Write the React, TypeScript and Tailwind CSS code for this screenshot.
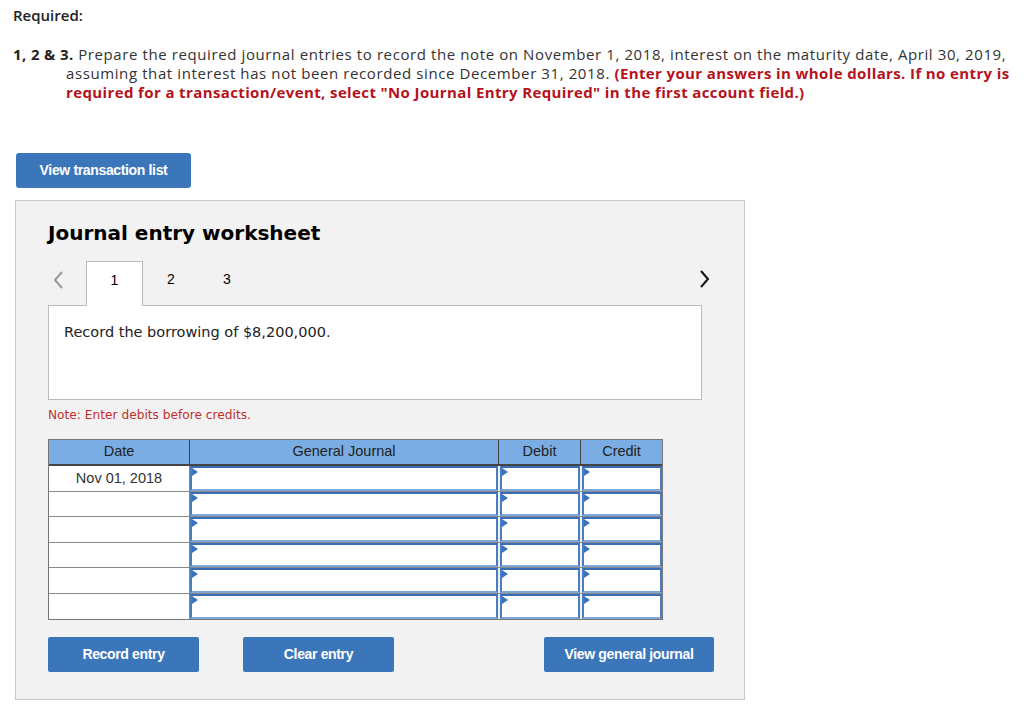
import React from "react";

const Cell = () => (
  <div className="relative h-full border-2 border-[#4a7cc0] border-t-[#3b6db5] border-b-[#7fa6d8] bg-white">
    <div className="absolute left-0 top-0 w-0 h-0 border-t-[4px] border-b-[4px] border-l-[6px] border-t-transparent border-b-transparent border-l-[#3a73bd]" />
  </div>
);

const btn = "h-[35px] rounded-[2px] bg-[#3b76bb] text-white text-[14px] font-bold tracking-[-0.35px]";

export default function App() {
  const rows = ["Nov 01, 2018", "", "", "", "", ""];
  return (
    <div className="w-[1024px] h-[725px] bg-white text-[#333] overflow-hidden" style={{ fontFamily: "'Open Sans', Lato, sans-serif" }}>
      <div className="pl-[13px] pt-[6px] whitespace-nowrap">
        <div className="text-[15px] font-semibold leading-[19px] text-[#222]">Required:</div>
        <div className="mt-[20px] text-[15px] leading-[19px] tracking-[0.6px]">
          <div>
            <b className="font-bold text-[#222] tracking-[0.38px]">1, 2 &amp; 3.</b> Prepare the required journal entries to record the note on November 1, 2018, interest on the maturity date, April 30, 2019,
          </div>
          <div className="pl-[53px]">
            assuming that interest has not been recorded since December 31, 2018.{" "}
            <b className="font-bold text-[#b5121b] tracking-[0.38px]">(Enter your answers in whole dollars. If no entry is</b>
          </div>
          <div className="pl-[53px]">
            <b className="font-bold text-[#b5121b] tracking-[0.38px]">required for a transaction/event, select "No Journal Entry Required" in the first account field.)</b>
          </div>
        </div>
      </div>

      <div className="pl-[16px] mt-[51px]">
        <button className={`w-[175px] ${btn} h-[34px] rounded-[3px]`} style={{ fontFamily: "'Liberation Sans', Arial, sans-serif" }}>
          View transaction list
        </button>
      </div>

      <div className="ml-[15px] mt-[12px] w-[730px] h-[500px] bg-[#f2f2f2] border border-[#c8c8c8] pl-[32px]" style={{ fontFamily: "'DejaVu Sans', Verdana, sans-serif" }}>
        <div className="pt-[20px] text-[20px] font-bold text-black leading-[24px]">Journal entry worksheet</div>

        <div className="mt-[16px] flex items-end h-[45px] w-[654px] relative">
          <svg className="absolute left-[4px] top-[9px]" width="12" height="20" viewBox="0 0 12 20"><path d="M10 2 L3 10 L10 18" stroke="#999" strokeWidth="2" fill="none" /></svg>
          <div className="ml-[38px] w-[57px] h-[45px] bg-white border border-[#bbb] border-b-0 relative z-10 flex justify-center pt-[8px] text-[14px] text-black" style={{ fontFamily: "'Liberation Sans', Arial, sans-serif" }}>1</div>
          <div className="w-[56px] h-[45px] flex justify-center pt-[8px] text-[14px] text-black" style={{ fontFamily: "'Liberation Sans', Arial, sans-serif" }}>2</div>
          <div className="w-[56px] h-[45px] flex justify-center pt-[8px] text-[14px] text-black" style={{ fontFamily: "'Liberation Sans', Arial, sans-serif" }}>3</div>
          <svg className="absolute left-[651px] top-[8px]" width="12" height="20" viewBox="0 0 12 20"><path d="M2 2 L9 10 L2 18" stroke="#111" strokeWidth="2" fill="none" /></svg>
        </div>

        <div className="-mt-px w-[654px] h-[95px] bg-white border border-[#bbb] pl-[15px] pt-[16px] text-[14.5px] text-[#222]">
          Record the borrowing of $8,200,000.
        </div>

        <div className="mt-[7px] text-[12.2px] text-[#c0302c] leading-[16px]">Note: Enter debits before credits.</div>

        <div className="mt-[16px] w-[615px] border border-[#777] bg-[#f2f2f2]" style={{ fontFamily: "'Liberation Sans', Arial, sans-serif" }}>
          <div className="grid grid-cols-[141px_309px_82px_81px] h-[26px] bg-[#7aade3] border-b-2 border-[#444] text-[14.5px] text-[#222] items-center">
            <div className="text-center border-r border-[#444] h-full flex items-center justify-center">Date</div>
            <div className="text-center border-r border-[#444] h-full flex items-center justify-center">General Journal</div>
            <div className="text-center border-r border-[#444] h-full flex items-center justify-center">Debit</div>
            <div className="text-center h-full flex items-center justify-center">Credit</div>
          </div>
          {rows.map((d, i) => (
            <div key={i} className={`grid grid-cols-[141px_309px_82px_81px] h-[25.5px] ${i < rows.length - 1 ? "border-b border-[#888]" : ""}`}>
              <div className="bg-white border-r border-[#888] text-center text-[14.5px] text-[#333] leading-[24px]">{d}</div>
              <div className="pr-[1px]"><Cell /></div>
              <div className="pl-[1px] pr-[1px]"><Cell /></div>
              <div className="pl-[1px]"><Cell /></div>
            </div>
          ))}
        </div>

        <div className="mt-[17px] w-[666px] flex" style={{ fontFamily: "'Liberation Sans', Arial, sans-serif" }}>
          <button className={`w-[151px] ${btn}`}>Record entry</button>
          <button className={`ml-[44px] w-[151px] ${btn}`}>Clear entry</button>
          <button className={`ml-auto w-[170px] ${btn}`}>View general journal</button>
        </div>
      </div>
    </div>
  );
}
